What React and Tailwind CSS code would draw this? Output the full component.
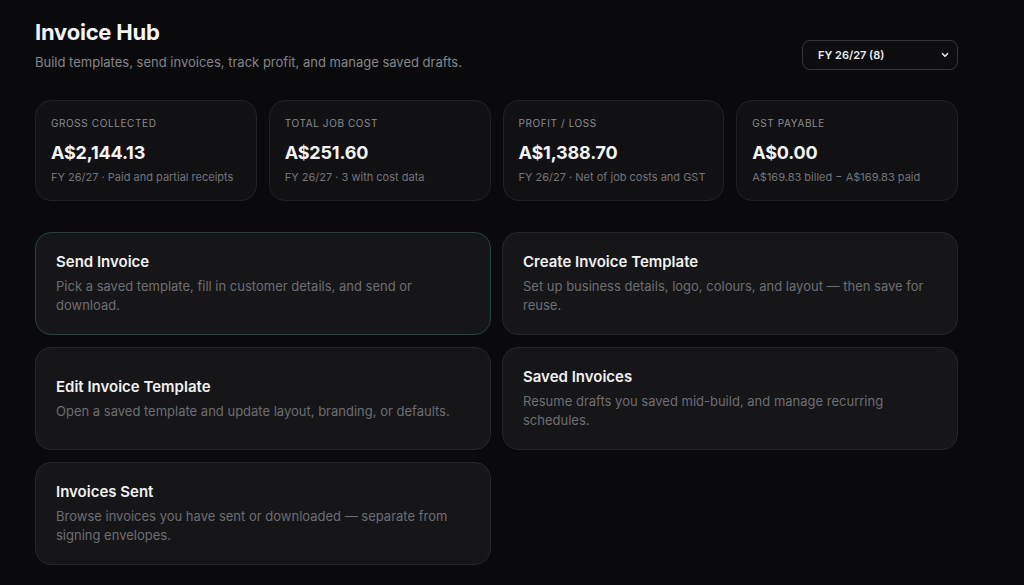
import React from 'react';

const stats = [
  { label: 'Gross collected', value: 'A$2,144.13', sub: 'FY 26/27 · Paid and partial receipts' },
  { label: 'Total job cost', value: 'A$251.60', sub: 'FY 26/27 · 3 with cost data' },
  { label: 'Profit / Loss', value: 'A$1,388.70', sub: 'FY 26/27 · Net of job costs and GST' },
  { label: 'GST payable', value: 'A$0.00', sub: 'A$169.83 billed − A$169.83 paid' },
];

const actions = [
  { title: 'Send Invoice', desc: 'Pick a saved template, fill in customer details, and send or download.', active: true },
  { title: 'Create Invoice Template', desc: 'Set up business details, logo, colours, and layout — then save for reuse.' },
  { title: 'Edit Invoice Template', desc: 'Open a saved template and update layout, branding, or defaults.' },
  { title: 'Saved Invoices', desc: 'Resume drafts you saved mid-build, and manage recurring schedules.' },
  { title: 'Invoices Sent', desc: 'Browse invoices you have sent or downloaded — separate from signing envelopes.' },
];

function StatCard({ label, value, sub }) {
  return (
    <div className="rounded-2xl border border-[#222226] bg-[#111114] px-[15px] py-[15px]">
      <div className="text-[10px] uppercase tracking-[0.06em] text-[#8a8a90] leading-[14px]">{label}</div>
      <div className="mt-[10px] text-[18px] font-bold text-[#f4f4f5] leading-[26px] tracking-[-0.01em]">{value}</div>
      <div className="mt-[3px] text-[11px] text-[#74747a] leading-[16px]">{sub}</div>
    </div>
  );
}

function ActionCard({ title, desc, active }) {
  return (
    <div
      className={
        active
          ? 'flex min-h-[103px] flex-col justify-center rounded-2xl border border-[#1f4636] bg-[#161618] px-5 py-4'
          : 'flex min-h-[103px] flex-col justify-center rounded-2xl border border-[#26262a] bg-[#161618] px-5 py-4'
      }
    >
      <div className="text-[15px] font-semibold text-[#f1f1f3] leading-[20px]">{title}</div>
      <div className="mt-[5px] text-[13px] text-[#6d6d73] leading-[19px]">{desc}</div>
    </div>
  );
}

export default function App() {
  return (
    <div
      className="min-h-[585px] bg-[#0a0a0c] px-[35px] pt-[17px] pb-5"
      style={{ fontFamily: 'Inter, "Noto Sans", sans-serif' }}
    >
      <div className="w-[923px]">
        <div className="flex items-end justify-between">
          <div>
            <h1 className="text-[22px] font-bold text-[#f5f5f6] leading-[30px] tracking-[-0.01em]">Invoice Hub</h1>
            <p className="mt-[6px] text-[13px] text-[#85858b] leading-[18px]">
              Build templates, send invoices, track profit, and manage saved drafts.
            </p>
          </div>
          <div className="mb-[1px] flex h-[30px] w-[156px] items-center justify-between rounded-lg border border-[#34343a] bg-[#0d0d10] pl-[15px] pr-[7px]">
            <span className="text-[11px] font-semibold text-[#ededf0]">FY 26/27 (8)</span>
            <svg width="10" height="10" viewBox="0 0 24 24" fill="none" stroke="#e5e5e8" strokeWidth="4" strokeLinecap="round" strokeLinejoin="round">
              <path d="M6 9l6 6 6-6" />
            </svg>
          </div>
        </div>

        <div className="mt-[29px] grid grid-cols-4 gap-3">
          {stats.map((s) => (
            <StatCard key={s.label} {...s} />
          ))}
        </div>

        <div className="mt-[31px] grid grid-cols-2 gap-x-[11px] gap-y-3">
          {actions.map((a) => (
            <ActionCard key={a.title} {...a} />
          ))}
        </div>
      </div>
    </div>
  );
}
